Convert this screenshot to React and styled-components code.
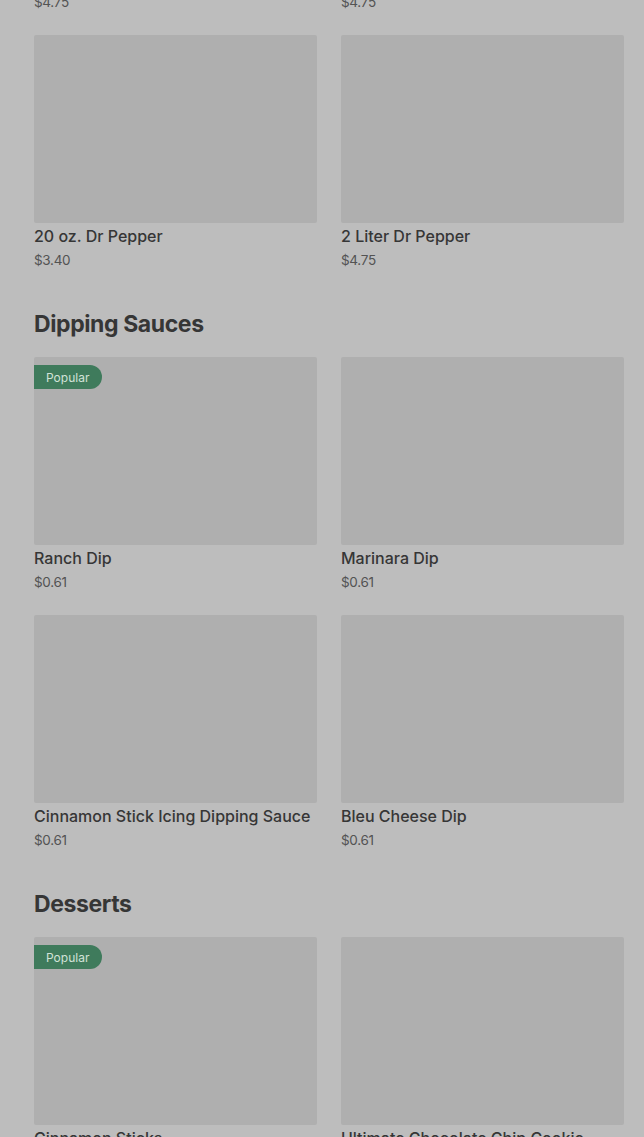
import React from 'react'
import styled, { createGlobalStyle } from 'styled-components'

const GlobalStyle = createGlobalStyle`
  html, body {
    margin: 0;
    padding: 0;
    background: #bdbdbd;
    overflow: hidden;
  }
  body {
    font-family: Inter, "Noto Sans", "Liberation Sans", sans-serif;
    color: #2f2f2f;
  }
`

const Page = styled.main`
  padding: 0 20px 0 34px;
  margin-top: -223px;
`

const Section = styled.section`
  & + & { margin-top: 38px; }
`

const Heading = styled.h2`
  margin: 0 0 17px;
  font-size: 23px;
  line-height: 32px;
  font-weight: 700;
  letter-spacing: -0.4px;
  color: #363636;
`

const Grid = styled.div`
  display: grid;
  grid-template-columns: 1fr 1fr;
  column-gap: 24px;
  row-gap: 23px;
`

const Card = styled.div`
  display: flex;
  flex-direction: column;
`

const Thumb = styled.div`
  position: relative;
  height: 188px;
  background: #afafaf;
  border-radius: 2px;
`

const Badge = styled.span`
  position: absolute;
  top: 8px;
  left: 0;
  height: 24px;
  padding: 0 13px 0 12px;
  display: flex;
  align-items: center;
  background: #3f7b5c;
  color: #d2e2d8;
  font-size: 12px;
  border-radius: 0 12px 12px 0;
`

const Name = styled.div`
  margin-top: 3px;
  font-size: 16px;
  line-height: 20px;
  font-weight: 500;
  color: #363636;
`

const Price = styled.div`
  margin-top: 4px;
  font-size: 13.5px;
  line-height: 20px;
  color: #535353;
  letter-spacing: -0.3px;
`

const sections = [
  {
    title: null,
    items: [
      { name: '2 Liter Coca-Cola', price: '$4.75' },
      { name: '2 Liter Sprite', price: '$4.75' },
      { name: '20 oz. Dr Pepper', price: '$3.40' },
      { name: '2 Liter Dr Pepper', price: '$4.75' },
    ],
  },
  {
    title: 'Dipping Sauces',
    items: [
      { name: 'Ranch Dip', price: '$0.61', popular: true },
      { name: 'Marinara Dip', price: '$0.61' },
      { name: 'Cinnamon Stick Icing Dipping Sauce', price: '$0.61' },
      { name: 'Bleu Cheese Dip', price: '$0.61' },
    ],
  },
  {
    title: 'Desserts',
    items: [
      { name: 'Cinnamon Sticks', price: '$3.99', popular: true },
      { name: 'Ultimate Chocolate Chip Cookie', price: '$6.99' },
    ],
  },
]

const MenuItem = ({ name, price, popular }) => (
  <Card>
    <Thumb>{popular && <Badge>Popular</Badge>}</Thumb>
    <Name>{name}</Name>
    <Price>{price}</Price>
  </Card>
)

export default function App() {
  return (
    <>
      <GlobalStyle />
      <Page>
        {sections.map((s, i) => (
          <Section key={i}>
            {s.title && <Heading>{s.title}</Heading>}
            <Grid>
              {s.items.map(item => (
                <MenuItem key={item.name} {...item} />
              ))}
            </Grid>
          </Section>
        ))}
      </Page>
    </>
  )
}
